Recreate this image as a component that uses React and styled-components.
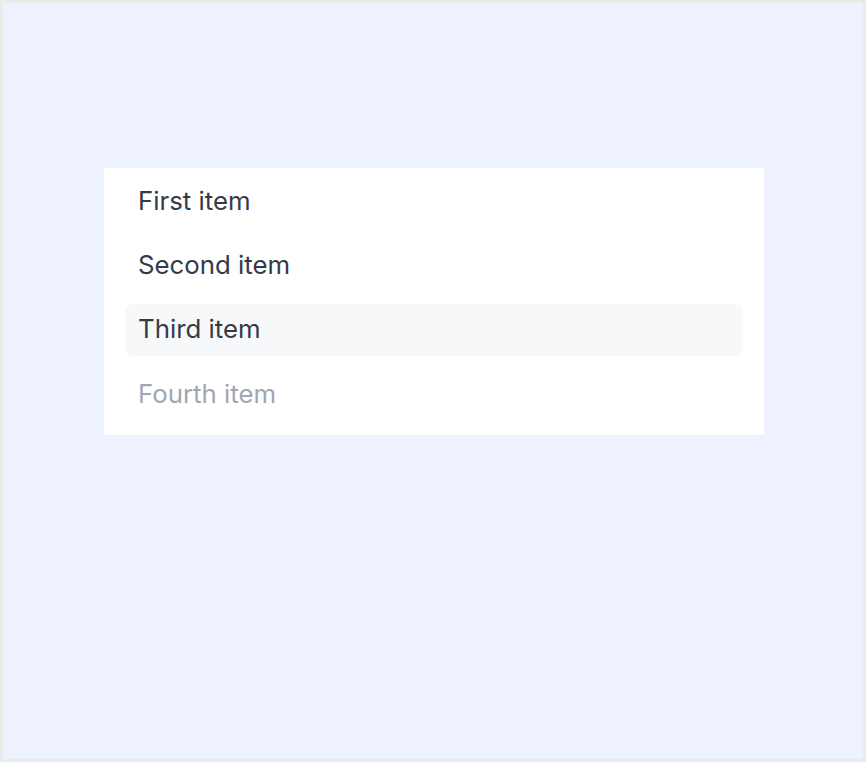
import styled, { createGlobalStyle } from "styled-components";

const GlobalStyle = createGlobalStyle`
  html, body {
    margin: 0;
    padding: 0;
  }
  body {
    font-family: Inter, "Noto Sans", sans-serif;
    background: #ececec;
  }
`;

const Page = styled.div`
  box-sizing: border-box;
  width: 866px;
  height: 762px;
  border: 3px solid #ebebeb;
  background: #eef1fe;
  padding: 165px 0 0 101px;
`;

const Menu = styled.ul`
  box-sizing: border-box;
  list-style: none;
  margin: 0;
  width: 660px;
  height: 267px;
  padding: 7px 21px 15px;
  background: #ffffff;
  display: flex;
  flex-direction: column;
  gap: 12.4px;
`;

const Item = styled.li`
  box-sizing: border-box;
  flex: none;
  height: 52px;
  display: flex;
  align-items: center;
  padding: 0 13px 2px;
  border-radius: 8px;
  font-size: 25.8px;
  color: ${(p) => (p.$disabled ? "#a1a6b2" : "#363a46")};
  background: ${(p) => (p.$active ? "#f7f8fa" : "transparent")};
`;

const items = [
  { label: "First item" },
  { label: "Second item" },
  { label: "Third item", active: true },
  { label: "Fourth item", disabled: true },
];

export default function App() {
  return (
    <>
      <GlobalStyle />
      <Page>
        <Menu>
          {items.map((it) => (
            <Item key={it.label} $active={it.active} $disabled={it.disabled}>
              {it.label}
            </Item>
          ))}
        </Menu>
      </Page>
    </>
  );
}
